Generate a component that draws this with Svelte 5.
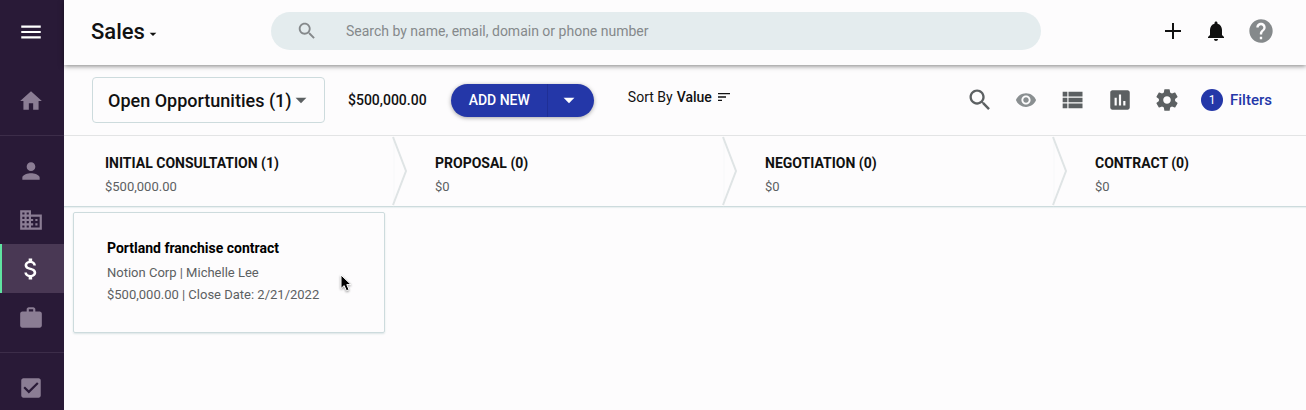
<script>
  const icons = {
    menu: 'M3 18h18v-2H3v2zm0-5h18v-2H3v2zm0-7v2h18V6H3z',
    home: 'M10 20v-6h4v6h5v-8h3L12 3 2 12h3v8z',
    person: 'M12 12c2.21 0 4-1.79 4-4s-1.79-4-4-4-4 1.79-4 4 1.79 4 4 4zm0 2c-2.67 0-8 1.34-8 4v2h16v-2c0-2.66-5.33-4-8-4z',
    business: 'M12 7V3H2v18h20V7H12zM6 19H4v-2h2v2zm0-4H4v-2h2v2zm0-4H4V9h2v2zm0-4H4V5h2v2zm4 12H8v-2h2v2zm0-4H8v-2h2v2zm0-4H8V9h2v2zm0-4H8V5h2v2zm10 12h-8v-2h2v-2h-2v-2h2v-2h-2V9h8v10zm-2-8h-2v2h2v-2zm0 4h-2v2h2v-2z',
    money: 'M11.8 10.9c-2.27-.59-3-1.2-3-2.15 0-1.09 1.01-1.85 2.7-1.85 1.78 0 2.44.85 2.5 2.1h2.21c-.07-1.72-1.12-3.3-3.21-3.81V3h-3v2.16c-1.94.42-3.5 1.68-3.5 3.61 0 2.31 1.91 3.46 4.7 4.13 2.5.6 3 1.48 3 2.41 0 .69-.49 1.79-2.7 1.79-2.06 0-2.87-.92-2.98-2.1h-2.2c.12 2.19 1.76 3.42 3.68 3.83V21h3v-2.15c1.95-.37 3.5-1.5 3.5-3.55 0-2.84-2.43-3.81-4.7-4.4z',
    work: 'M20 6h-4V4c0-1.11-.89-2-2-2h-4c-1.11 0-2 .89-2 2v2H4c-1.11 0-1.99.89-1.99 2L2 19c0 1.11.89 2 2 2h16c1.11 0 2-.89 2-2V8c0-1.11-.89-2-2-2zm-6 0h-4V4h4v2z',
    check: 'M19 3H5c-1.11 0-2 .9-2 2v14c0 1.1.89 2 2 2h14c1.11 0 2-.9 2-2V5c0-1.1-.89-2-2-2zm-9 14l-5-5 1.41-1.41L10 14.17l7.59-7.59L19 8l-9 9z',
    search: 'M15.5 14h-.79l-.28-.27C15.41 12.59 16 11.11 16 9.5 16 5.91 13.09 3 9.5 3S3 5.91 3 9.5 5.91 16 9.5 16c1.61 0 3.09-.59 4.23-1.57l.27.28v.79l5 4.99L20.49 19l-4.99-5zm-6 0C7.01 14 5 11.99 5 9.5S7.01 5 9.5 5 14 7.01 14 9.5 11.99 14 9.5 14z',
    caret: 'M7 10l5 5 5-5z',
    add: 'M20 13h-7v7h-2v-7H4v-2h7V4h2v7h7v2z',
    bell: 'M12 22c1.1 0 2-.9 2-2h-4c0 1.1.89 2 2 2zm6-6v-5c0-3.07-1.64-5.64-4.5-6.32V4c0-.83-.67-1.5-1.5-1.5s-1.5.67-1.5 1.5v.68C7.63 5.36 6 7.92 6 11v5l-2 2v1h16v-1l-2-2z',
    help: 'M12 2C6.48 2 2 6.48 2 12s4.48 10 10 10 10-4.48 10-10S17.52 2 12 2zm1 17h-2v-2h2v2zm2.07-7.75l-.9.92C13.45 12.9 13 13.5 13 15h-2v-.5c0-1.1.45-2.1 1.17-2.83l1.24-1.26c.37-.36.59-.86.59-1.41 0-1.1-.9-2-2-2s-2 .9-2 2H8c0-2.21 1.79-4 4-4s4 1.79 4 4c0 .88-.36 1.68-.93 2.25z',
    sort: 'M3 18h6v-2H3v2zM3 6v2h18V6H3zm0 7h12v-2H3v2z',
    eye: 'M12 4.5C7 4.5 2.73 7.61 1 12c1.73 4.39 6 7.5 11 7.5s9.27-3.11 11-7.5c-1.73-4.39-6-7.5-11-7.5zM12 17c-2.76 0-5-2.24-5-5s2.24-5 5-5 5 2.24 5 5-2.24 5-5 5zm0-8c-1.66 0-3 1.34-3 3s1.34 3 3 3 3-1.34 3-3-1.34-3-3-3z',
    list: 'M4 14h4v-4H4v4zm0 5h4v-4H4v4zM4 9h4V5H4v4zm5 5h12v-4H9v4zm0 5h12v-4H9v4zM9 5v4h12V5H9z',
    chart: 'M19 3H5c-1.1 0-2 .9-2 2v14c0 1.1.9 2 2 2h14c1.1 0 2-.9 2-2V5c0-1.1-.9-2-2-2zM9 17H7v-7h2v7zm4 0h-2V7h2v10zm4 0h-2v-4h2v4z',
    gear: 'M19.43 12.98c.04-.32.07-.64.07-.98s-.03-.66-.07-.98l2.11-1.65c.19-.15.24-.42.12-.64l-2-3.46c-.12-.22-.39-.3-.61-.22l-2.49 1c-.52-.4-1.08-.73-1.69-.98l-.38-2.65C14.46 2.18 14.25 2 14 2h-4c-.25 0-.46.18-.49.42l-.38 2.65c-.61.25-1.17.59-1.69.98l-2.49-1c-.23-.09-.49 0-.61.22l-2 3.46c-.13.22-.07.49.12.64l2.11 1.65c-.04.32-.07.65-.07.98s.03.66.07.98l-2.11 1.65c-.19.15-.24.42-.12.64l2 3.46c.12.22.39.3.61.22l2.49-1c.52.4 1.08.73 1.69.98l.38 2.65c.03.24.24.42.49.42h4c.25 0 .46-.18.49-.42l.38-2.65c.61-.25 1.17-.59 1.69-.98l2.49 1c.23.09.49 0 .61-.22l2-3.46c.12-.22.07-.49-.12-.64l-2.11-1.65zM12 15.5c-1.93 0-3.5-1.57-3.5-3.5s1.57-3.5 3.5-3.5 3.5 1.57 3.5 3.5-1.57 3.5-3.5 3.5z'
  };

  const nav = [
    [{ icon: 'home' }],
    [{ icon: 'person' }, { icon: 'business' }, { icon: 'money', active: true }, { icon: 'work' }],
    [{ icon: 'check' }]
  ];

  const tools = [
    { icon: 'search', size: 'wide' },
    { icon: 'eye', size: 'small' },
    { icon: 'list', size: 'wide' },
    { icon: 'chart', size: 'large' },
    { icon: 'gear', size: 'large' }
  ];

  const stages = [
    {
      name: 'INITIAL CONSULTATION (1)',
      total: '$500,000.00',
      cards: [
        {
          title: 'Portland franchise contract',
          contact: 'Notion Corp | Michelle Lee',
          detail: '$500,000.00 | Close Date: 2/21/2022'
        }
      ]
    },
    { name: 'PROPOSAL (0)', total: '$0', cards: [] },
    { name: 'NEGOTIATION (0)', total: '$0', cards: [] },
    { name: 'CONTRACT (0)', total: '$0', cards: [] }
  ];
</script>

{#snippet icon(name, size = 'large')}
  <svg class="icon {size}" viewBox="0 0 24 24" aria-hidden="true"><path d={icons[name]} /></svg>
{/snippet}

<div class="app">
  <nav class="sidebar">
    <button class="menu">{@render icon('menu')}</button>
    {#each nav as group}
      <ul>
        {#each group as item}
          <li>
            <a href="#{item.icon}" class:active={item.active}>
              {@render icon(item.icon, item.active ? 'wide' : 'large')}
            </a>
          </li>
        {/each}
      </ul>
    {/each}
  </nav>

  <div class="main">
    <header class="topbar">
      <button class="title">Sales {@render icon('caret', 'tiny')}</button>
      <label class="search">
        {@render icon('search', 'small')}
        <input type="text" placeholder="Search by name, email, domain or phone number" />
      </label>
      <div class="actions">
        <button>{@render icon('add', 'medium')}</button>
        <button>{@render icon('bell', 'medium')}</button>
        <button class="muted">{@render icon('help', 'wide')}</button>
      </div>
    </header>

    <div class="toolbar">
      <label class="view">
        <select>
          <option>Open Opportunities (1)</option>
        </select>
        {@render icon('caret')}
      </label>
      <span class="amount">$500,000.00</span>
      <div class="split">
        <button class="add">ADD NEW</button>
        <button class="more">{@render icon('caret', 'large')}</button>
      </div>
      <button class="sort">Sort By <b>Value</b> {@render icon('sort', 'tiny')}</button>
      <div class="tools">
        {#each tools as tool}
          <button class:muted={tool.icon === 'eye'}>{@render icon(tool.icon, tool.size)}</button>
        {/each}
        <button class="filters"><span class="badge">1</span>Filters</button>
      </div>
    </div>

    <main class="board">
      {#each stages as stage, i}
        <section>
          <header class="stage">
            <h2>{stage.name}</h2>
            <p>{stage.total}</p>
            {#if i < stages.length - 1}
              <svg class="chevron" viewBox="0 0 16 70" preserveAspectRatio="none" aria-hidden="true">
                <path d="M1 1L14 35L1 69" />
              </svg>
            {/if}
          </header>
          {#each stage.cards as card}
            <article class="card">
              <h3>{card.title}</h3>
              <p>{card.contact}</p>
              <p>{card.detail}</p>
              <svg class="pointer" viewBox="0 0 12 18" aria-hidden="true">
                <path d="M1 1V14.5L4.2 11.6L6.4 16.8L9 15.7L6.8 10.6H11Z" />
              </svg>
            </article>
          {/each}
        </section>
      {/each}
    </main>
  </div>
</div>

<style>
  :global(body) {
    margin: 0;
    background: #fdfcfd;
  }

  .app {
    display: flex;
    height: 100vh;
    overflow: hidden;
    font-family: Roboto, 'Liberation Sans', sans-serif;
    color: #111;
  }

  button {
    display: flex;
    align-items: center;
    padding: 0;
    border: 0;
    background: none;
    color: inherit;
    font: inherit;
    white-space: nowrap;
    cursor: pointer;
  }

  h2, h3, p, ul {
    margin: 0;
    padding: 0;
  }

  .icon {
    display: block;
    flex: none;
    width: 26px;
    height: 26px;
    fill: currentColor;
  }
  .icon.tiny { width: 16px; height: 16px; }
  .icon.small { width: 22px; height: 22px; }
  .icon.medium { width: 24px; height: 24px; }
  .icon.wide { width: 28px; height: 28px; }

  .sidebar {
    flex: none;
    width: 64px;
    overflow: hidden;
    background: #291a37;
    color: #8b7d94;
  }
  .menu {
    justify-content: center;
    width: 100%;
    height: 66px;
    padding: 0 2px 2px 0;
    color: #fff;
  }
  .sidebar ul {
    padding: 10px 0;
    list-style: none;
  }
  .sidebar ul + ul {
    border-top: 1px solid #3c2d49;
  }
  .sidebar a {
    display: flex;
    align-items: center;
    justify-content: center;
    height: 49px;
    padding-right: 2px;
    color: inherit;
  }
  .sidebar a.active {
    background: #493854;
    box-shadow: inset 2px 0 #5fe3a1;
    color: #fff;
  }

  .main {
    display: flex;
    flex: 1;
    flex-direction: column;
    min-width: 0;
  }

  .topbar {
    position: relative;
    display: flex;
    flex: none;
    align-items: center;
    height: 65px;
    box-sizing: border-box;
    padding: 0 31px 3px 27px;
    background: #fdfcfd;
    box-shadow: 0 1px 5px rgba(0, 0, 0, 0.5);
  }
  .title {
    width: 180px;
    font-size: 22px;
    font-weight: 500;
  }
  .title .icon {
    margin-top: 5px;
  }
  .search {
    display: flex;
    flex: 1;
    align-items: center;
    gap: 28px;
    height: 38px;
    padding: 0 25px;
    border-radius: 19px;
    background: #e4ecee;
    color: #85898b;
  }
  .search input {
    flex: 1;
    min-width: 0;
    padding: 0;
    border: 0;
    outline: 0;
    background: none;
    color: #222;
    font: 14px Roboto, 'Liberation Sans', sans-serif;
  }
  .search input::placeholder {
    color: #85898b;
    opacity: 1;
  }
  .actions {
    display: flex;
    align-items: center;
    gap: 19px;
    margin-left: 120px;
  }
  .muted { color: #85898b; }

  .toolbar {
    display: flex;
    flex: none;
    align-items: center;
    height: 70px;
    padding: 0 34px 0 28px;
    border-bottom: 1px solid #e3e4e5;
  }
  .view {
    position: relative;
    display: flex;
    align-items: center;
    height: 46px;
    box-sizing: border-box;
    border: 1px solid #cddbdd;
    border-radius: 4px;
  }
  .view select {
    height: 44px;
    padding: 0 32px 0 15px;
    border: 0;
    outline: 0;
    background: none;
    color: #111;
    font: 500 18px Roboto, 'Liberation Sans', sans-serif;
    appearance: none;
  }
  .view .icon {
    position: absolute;
    right: 10px;
    color: #5c6062;
    pointer-events: none;
  }
  .amount {
    margin: 0 24px 0 23px;
    font-size: 14px;
    font-weight: 500;
  }
  .split {
    display: flex;
    height: 33px;
    border-radius: 17px;
    background: #2437a8;
    box-shadow: 0 1px 4px rgba(0, 0, 0, 0.35);
    color: #fff;
    font-size: 14px;
    font-weight: 500;
  }
  .add {
    padding: 0 17px 0 18px;
  }
  .more {
    padding: 0 12px 0 8px;
    border-left: 1px solid #1f2f96;
  }
  .sort {
    gap: 4px;
    margin: 0 0 6px 34px;
    font-size: 14px;
  }
  .sort b { font-weight: 500; }

  .tools {
    display: flex;
    align-items: center;
    gap: 21px;
    margin-left: auto;
    color: #5c6062;
  }
  .tools .muted { color: #8a8f91; }
  .tools .filters {
    gap: 7px;
    color: #2437a8;
    font-size: 15px;
    font-weight: 500;
  }
  .badge {
    width: 22px;
    border-radius: 50%;
    background: #2437a8;
    color: #fff;
    font-size: 12px;
    font-weight: 400;
    line-height: 22px;
    text-align: center;
  }

  .board {
    display: grid;
    flex: 1;
    grid-auto-columns: minmax(330px, 1fr);
    grid-auto-flow: column;
    overflow: hidden;
  }
  .stage {
    position: relative;
    padding: 17px 24px 8px 41px;
    border-bottom: 1px solid #cddbdd;
    box-shadow: 0 1px 1px #eaf0f1;
  }
  .stage h2 {
    margin-bottom: 2px;
    font-size: 14px;
    font-weight: 700;
    line-height: 20px;
  }
  .stage p {
    color: #5c6062;
    font-size: 13px;
    line-height: 23px;
  }
  .chevron {
    position: absolute;
    top: 0;
    right: -14px;
    z-index: 1;
    width: 16px;
    height: 100%;
    fill: none;
    stroke: #dfe4e5;
    stroke-width: 2;
  }
  .card {
    position: relative;
    margin: 5px 9px;
    padding: 23px 33px 26px;
    border: 1px solid #cddbdd;
    border-radius: 2px;
    box-shadow: 0 1px 2px #dbe4e5;
  }
  .card h3 {
    margin-bottom: 2px;
    color: #000;
    font-size: 14px;
    font-weight: 700;
    line-height: 24px;
  }
  .card p {
    color: #5c6062;
    font-size: 13px;
    line-height: 22px;
  }
  .pointer {
    position: absolute;
    top: 61px;
    right: 32px;
    width: 12px;
    height: 18px;
    fill: #000;
    stroke: #fff;
    stroke-width: 1;
    filter: drop-shadow(0 1px 1px rgba(0, 0, 0, 0.4));
  }
</style>
